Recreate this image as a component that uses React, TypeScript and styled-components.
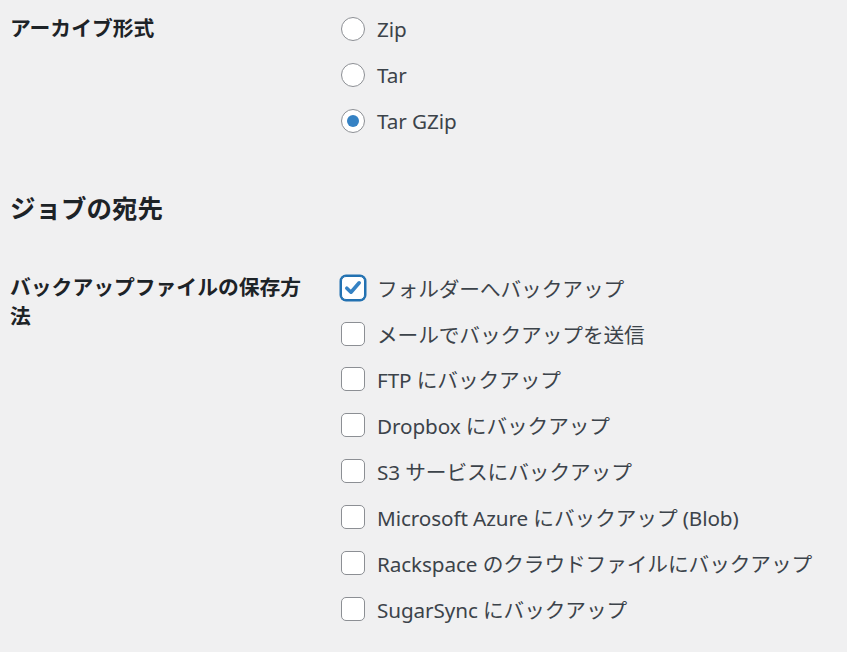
import React from "react";
import styled, { createGlobalStyle } from "styled-components";

const Global = createGlobalStyle`
  html, body { margin: 0; padding: 0; background: #f0f0f1; }
  body {
    font-family: "Noto Sans", "Noto Sans CJK JP", sans-serif;
    color: #3c434a;
  }
`;

const Page = styled.div`
  padding: 0 0 0 10px;
  width: 847px;
  height: 652px;
  overflow: hidden;
  box-sizing: border-box;
`;

const Row = styled.div<{ $top: number }>`
  display: grid;
  grid-template-columns: 331px 1fr;
  margin-top: ${(p) => p.$top}px;
`;

const Th = styled.div<{ $pad: number }>`
  padding-top: ${(p) => p.$pad}px;
  font-weight: 700;
  font-size: 20.8px;
  line-height: 29px;
  color: #1d2327;
  width: 300px;
  word-break: break-all;
`;

const Td = styled.div`
  display: flex;
  flex-direction: column;
`;

const Heading = styled.h2`
  margin: 47px 0 0 0;
  font-size: 25.5px;
  line-height: 34px;
  font-weight: 700;
  color: #1d2327;
`;

const Option = styled.label`
  display: flex;
  align-items: center;
  height: 45.9px;
  gap: 12px;
  font-size: 20.7px;
  letter-spacing: -0.1px;
  color: #3c434a;
`;

const Radio = styled.span<{ $checked?: boolean }>`
  width: 24px;
  height: 24px;
  box-sizing: border-box;
  border-radius: 50%;
  border: 1.5px solid #8c8f94;
  background: #fff;
  display: flex;
  align-items: center;
  justify-content: center;
  flex-shrink: 0;
  &::after {
    content: "";
    display: ${(p) => (p.$checked ? "block" : "none")};
    width: 12px;
    height: 12px;
    border-radius: 50%;
    background: #3582c4;
  }
`;

const Check = styled.span<{ $checked?: boolean }>`
  width: 24px;
  height: 24px;
  box-sizing: border-box;
  border-radius: 5px;
  border: 1.5px solid ${(p) => (p.$checked ? "#2271b1" : "#8c8f94")};
  box-shadow: ${(p) => (p.$checked ? "0 0 0 1.5px #2271b1" : "none")};
  background: #fff;
  display: flex;
  align-items: center;
  justify-content: center;
  flex-shrink: 0;
`;

const Text = styled.span`
  white-space: nowrap;
`;

const radios = [
  { label: "Zip", checked: false },
  { label: "Tar", checked: false },
  { label: "Tar GZip", checked: true },
];

const checks = [
  { label: "フォルダーへバックアップ", checked: true },
  { label: "メールでバックアップを送信", checked: false },
  { label: "FTP にバックアップ", checked: false },
  { label: "Dropbox にバックアップ", checked: false },
  { label: "S3 サービスにバックアップ", checked: false },
  { label: "Microsoft Azure にバックアップ (Blob)", checked: false },
  { label: "Rackspace のクラウドファイルにバックアップ", checked: false },
  { label: "SugarSync にバックアップ", checked: false },
];

export default function App() {
  return (
    <>
      <Global />
      <Page>
        <Row $top={6}>
          <Th $pad={8}>アーカイブ形式</Th>
          <Td>
            {radios.map((r) => (
              <Option key={r.label}>
                <Radio $checked={r.checked} />
                <Text>{r.label}</Text>
              </Option>
            ))}
          </Td>
        </Row>
        <Heading>ジョブの宛先</Heading>
        <Row $top={40}>
          <Th $pad={8}>バックアップファイルの保存方法</Th>
          <Td>
            {checks.map((c) => (
              <Option key={c.label}>
                <Check $checked={c.checked}>
                  {c.checked && (
                    <svg width="20" height="20" viewBox="0 0 20 20">
                      <path
                        d="M3.8 10.2 L8 14.2 L16.2 4.8"
                        fill="none"
                        stroke="#3582c4"
                        strokeWidth="3.6"
                        strokeLinecap="round"
                        strokeLinejoin="round"
                      />
                    </svg>
                  )}
                </Check>
                <Text>{c.label}</Text>
              </Option>
            ))}
          </Td>
        </Row>
      </Page>
    </>
  );
}
